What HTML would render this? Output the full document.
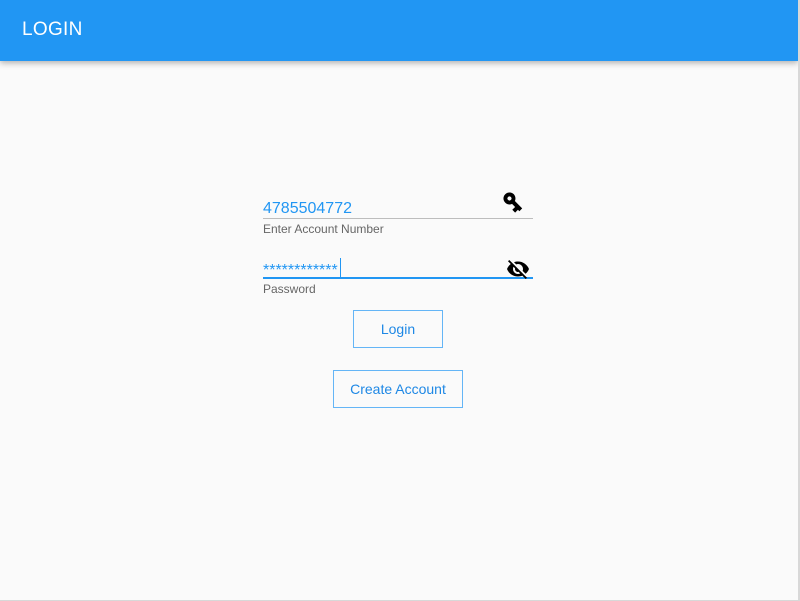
<!DOCTYPE html>
<html><head><meta charset="utf-8"><style>
html,body{margin:0;padding:0;width:800px;height:601px;overflow:hidden;background:#fafafa;font-family:"Liberation Sans",sans-serif;}
.bar{position:absolute;left:0;top:0;width:798px;height:61px;background:#2196f3;box-shadow:0 2px 6px rgba(0,0,0,.3);}
.bar span{position:absolute;left:22px;top:19px;color:#fff;font-size:19px;font-weight:500;letter-spacing:.3px;}
.rb{position:absolute;right:0;top:0;width:2px;height:601px;background:#d8d8d8;}
.bb{position:absolute;left:0;bottom:0;width:800px;height:1px;background:#d8d8d8;}
.t{position:absolute;}
.btn{position:absolute;border:1px solid #64b5f6;color:#1e88e5;font-size:14px;text-align:center;box-sizing:border-box;}
</style></head><body>
<div class="bar"><span>LOGIN</span></div>
<div class="rb"></div><div class="bb"></div>
<div class="t" style="left:263px;top:200px;font-size:16px;color:#2196f3;">4785504772</div>
<div class="t" style="left:263px;top:218px;width:270px;height:1px;background:#bdbdbd;"></div>
<div class="t" style="left:263px;top:222px;font-size:12px;color:#666;">Enter Account Number</div>
<svg class="t" style="left:501px;top:190px" width="24" height="24" viewBox="0 0 24 24"><path d="M12.65 10A6 6 0 1 0 12.65 14H17v4h4v-4h2v-4H12.65zM7 14a2 2 0 1 1 0-4 2 2 0 0 1 0 4z" transform="rotate(45 12 12)" fill="#000"/></svg>
<div class="t" style="left:263px;top:262px;font-size:16px;color:#2196f3;letter-spacing:0;">************</div>
<div class="t" style="left:340px;top:258px;width:1px;height:19px;background:#2196f3;"></div>
<div class="t" style="left:263px;top:277px;width:270px;height:2px;background:#2196f3;"></div>
<div class="t" style="left:263px;top:282px;font-size:12px;color:#666;">Password</div>
<svg class="t" style="left:506px;top:257px" width="24" height="24" viewBox="0 0 24 24"><path d="M12 7c2.76 0 5 2.24 5 5 0 .65-.13 1.26-.36 1.830l2.92 2.92c1.51-1.26 2.7-2.89 3.43-4.75-1.73-4.39-6-7.5-11-7.5-1.4 0-2.740.25-3.98.7l2.16 2.16C10.74 7.13 11.35 7 12 7zM2 4.27l2.28 2.28.46.46C3.08 8.3 1.78 10.02 1 12c1.73 4.39 6 7.5 11 7.5 1.55 0 3.03-.3 4.38-.84l.42.42L19.73 22 21 20.73 3.27 3 2 4.27zM7.53 9.8l1.55 1.55c-.05.21-.08.43-.08.65 0 1.66 1.34 3 3 3 .22 0 .44-.03.65-.08l1.55 1.550c-.67.33-1.41.53-2.2.53-2.76 0-5-2.24-5-5 0-.79.2-1.53.53-2.2z" fill="#000"/></svg>
<div class="btn" style="left:353px;top:310px;width:90px;height:38px;line-height:36px;">Login</div>
<div class="btn" style="left:333px;top:370px;width:130px;height:38px;line-height:36px;">Create Account</div>
</body></html>
